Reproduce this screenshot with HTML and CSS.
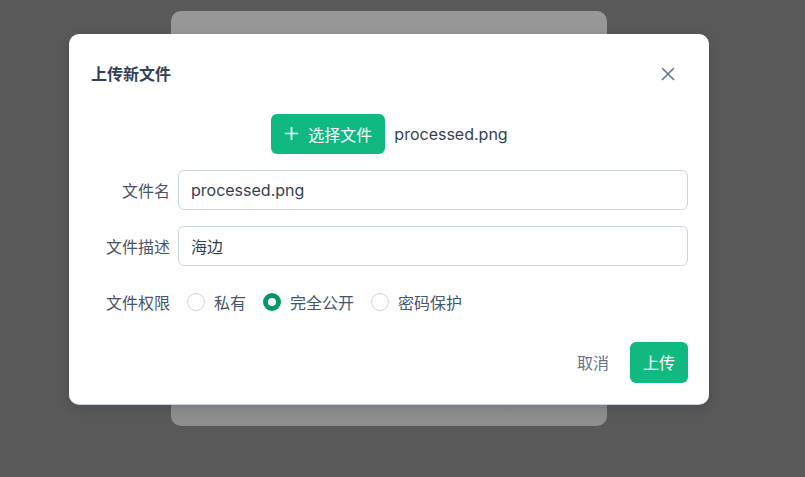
FILE: index.html
```html
<!DOCTYPE html>
<html lang="zh-CN">
<head>
    <meta charset="UTF-8">
    <meta name="viewport" content="width=device-width, initial-scale=1.0">
    <title>上传新文件</title>
    <link rel="stylesheet" href="styles.css">
</head>
<body>

<div class="stage">
    <div class="page-card"></div>

    <div class="modal">
        <div class="modal-header">
            <h3>上传新文件</h3>
            <button class="close-btn" aria-label="关闭">
                <svg width="14" height="14" viewBox="0 0 14 14"><path d="M1.5 1.5 L12.5 12.5 M12.5 1.5 L1.5 12.5" stroke="#64748b" stroke-width="1.6" stroke-linecap="round"/></svg>
            </button>
        </div>

        <div class="picker">
            <button class="btn btn-green btn-pick">
                <svg width="15" height="15" viewBox="0 0 16 16"><path d="M8 1 V15 M1 8 H15" stroke="#fff" stroke-width="1.8"/></svg>
                选择文件
            </button>
            <span class="picked-name">processed.png</span>
        </div>

        <div class="form-row">
            <label for="fileName">文件名</label>
            <input type="text" id="fileName" value="processed.png">
        </div>

        <div class="form-row">
            <label for="fileDesc">文件描述</label>
            <input type="text" id="fileDesc" value="海边">
        </div>

        <div class="form-row">
            <label>文件权限</label>
            <div class="radio-group">
                <span class="radio-item"><span class="radio"></span>私有</span>
                <span class="radio-item"><span class="radio checked"></span>完全公开</span>
                <span class="radio-item"><span class="radio"></span>密码保护</span>
            </div>
        </div>

        <div class="modal-footer">
            <button class="btn btn-text">取消</button>
            <button class="btn btn-green btn-submit">上传</button>
        </div>
    </div>
</div>

</body>
</html>
```

FILE: styles.css
```css
body {
    margin: 0;
    background: #595959;
    font-family: Inter, "Noto Sans CJK SC", sans-serif;
    color: #334155;
}

.stage {
    display: grid;
    place-items: center;
    width: 778px;
    height: 437px;
}

/* page behind the overlay */
.page-card {
    grid-area: 1 / 1;
    width: 436px;
    height: 415px;
    border-radius: 10px;
    background: linear-gradient(to bottom, #989898, #8e8e8e);
}

.modal {
    grid-area: 1 / 1;
    width: 640px;
    box-sizing: border-box;
    background: #fff;
    border-radius: 10px;
    padding: 28px 21px 21px 22px;
    box-shadow: 0 1px 0 #cbd5e1, 0 4px 12px rgba(0, 0, 0, 0.15);
}

.modal-header {
    display: flex;
    align-items: center;
    justify-content: space-between;
}

.modal-header h3 {
    margin: 0;
    font-size: 16px;
    line-height: 24px;
    font-weight: 700;
    color: #334155;
}

.close-btn {
    border: 0;
    background: none;
    padding: 0;
    margin-right: 13px;
    width: 14px;
    height: 14px;
    display: flex;
}

.btn {
    font-family: inherit;
    border: 0;
    border-radius: 6px;
    cursor: pointer;
}

.btn-green {
    background: #10b981;
    color: #fff;
}

.picker {
    display: flex;
    align-items: center;
    justify-content: center;
    gap: 9px;
    margin-top: 28px;
    margin-bottom: 16px;
}

.btn-pick {
    height: 40px;
    width: 114px;
    display: flex;
    align-items: center;
    justify-content: center;
    gap: 9px;
    padding: 0;
    font-size: 16px;
}

.picked-name {
    font-size: 16px;
    color: #334155;
}

.form-row {
    display: grid;
    grid-template-columns: 79px 1fr;
    column-gap: 8px;
    align-items: center;
    margin-bottom: 16px;
}

.form-row label {
    text-align: right;
    font-size: 16px;
    color: #475569;
}

.form-row input {
    height: 40px;
    box-sizing: border-box;
    border: 1px solid #cbd5e1;
    border-radius: 6px;
    padding: 0 12px;
    font-family: inherit;
    font-size: 16px;
    color: #334155;
    outline: none;
}

.radio-group {
    display: flex;
    align-items: center;
    height: 40px;
    padding-left: 8px;
    gap: 16px;
}

.radio-item {
    display: flex;
    align-items: center;
    gap: 8px;
    font-size: 16px;
    color: #475569;
}

.radio {
    width: 18px;
    height: 18px;
    margin: 0 1px;
    box-sizing: border-box;
    border: 1px solid #cbd5e1;
    border-radius: 50%;
}

.radio.checked {
    border: 5px solid #059669;
}

.modal-footer {
    display: flex;
    justify-content: flex-end;
    align-items: center;
    gap: 9px;
    margin-top: 20px;
}

.btn-text {
    background: none;
    color: #64748b;
    font-size: 16px;
    height: 40px;
    padding: 0 12px;
}

.btn-submit {
    height: 41px;
    width: 58px;
    font-size: 16px;
}
```
